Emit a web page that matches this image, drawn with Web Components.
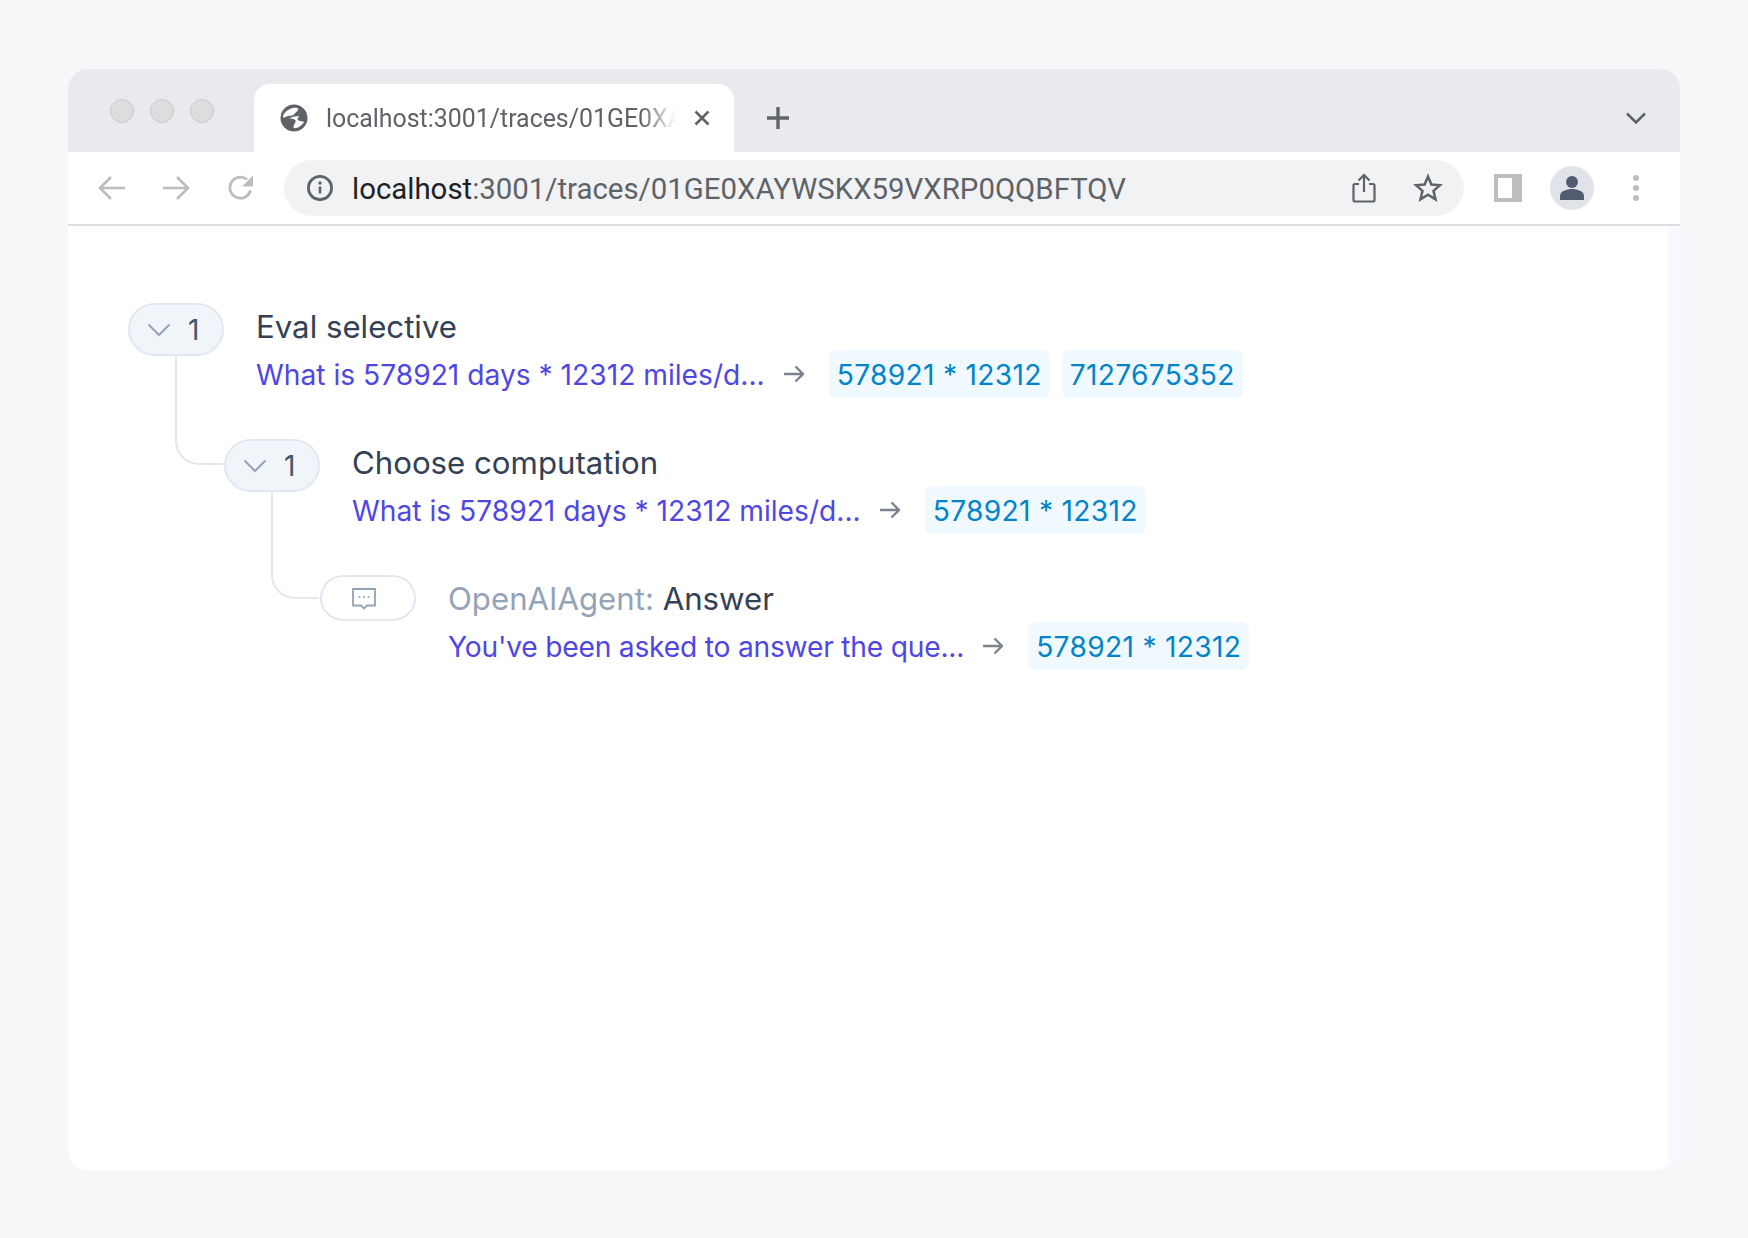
<!DOCTYPE html>
<html><head><meta charset="utf-8">
<style>
html,body{margin:0;padding:0;background:#f6f7f9;}
body{width:1748px;height:1238px;font-family:Inter,"Liberation Sans",sans-serif;}
</style></head>
<body>
<browser-window>
  <browser-tabstrip slot="strip" label="localhost:3001/traces/01GE0XA"></browser-tabstrip>
  <browser-toolbar slot="bar"></browser-toolbar>
  <trace-node count="1">
    <span slot="title">Eval selective</span>
    <span slot="input">What is 578921 days * 12312 miles/d...</span>
    <trace-tag slot="output">578921 * 12312</trace-tag>
    <trace-tag slot="output">7127675352</trace-tag>
    <trace-node count="1" child>
      <span slot="title">Choose computation</span>
      <span slot="input">What is 578921 days * 12312 miles/d...</span>
      <trace-tag slot="output">578921 * 12312</trace-tag>
      <trace-node leaf child>
        <span slot="title"><span style="color:#94a3b8">OpenAIAgent:</span> Answer</span>
        <span slot="input" style="letter-spacing:-.21px">You've been asked to answer the que...</span>
        <trace-tag slot="output">578921 * 12312</trace-tag>
      </trace-node>
    </trace-node>
  </trace-node>
</browser-window>
<script>
function def(name, html, init){
  customElements.define(name, class extends HTMLElement{
    constructor(){super();this.attachShadow({mode:'open'}).innerHTML=html;}
    connectedCallback(){if(init)init(this);}
  });
}
def('browser-window',`<style>
:host{display:block;box-sizing:border-box;padding:69px 68px 68px;height:1238px}
.win{height:1101px;display:flex;flex-direction:column;border-radius:20px;overflow:hidden;background:#f8f9fc}
.page{flex:1;margin-right:12px;background:#fff;padding:77px 60px 0;border-radius:0 0 12px 12px}
</style><div class="win"><slot name="strip"></slot><slot name="bar"></slot><div class="page"><slot></slot></div></div>`);

def('browser-tabstrip',`<style>
:host{display:flex;align-items:flex-end;height:83px;background:#e8eaed;position:relative;flex:none}
.lights{display:flex;gap:16px;padding-left:42px;width:144px;box-sizing:border-box;align-self:flex-start;align-items:center;height:84px}
.lights i{width:24px;height:24px;border-radius:50%;background:#dcdddf;border:1px solid #c6c8ca;box-sizing:border-box;flex:none}
.tab{width:480px;height:68px;margin-left:42px;background:#fff;border-radius:16px 16px 0 0;display:flex;align-items:center;padding-left:26px;box-sizing:border-box;position:relative}
.tab svg.g{width:28px;height:28px;flex:none}
.t{width:350px;margin-left:18px;white-space:nowrap;font:24.9px Roboto,sans-serif;color:#5f6368;-webkit-mask-image:linear-gradient(90deg,#000 90%,transparent 100%);mask-image:linear-gradient(90deg,#000 90%,transparent 100%)}
.x{width:18px;height:18px;margin-left:17px;flex:none}
.plus{width:26px;height:26px;margin:0 0 21px 31px;flex:none}
.sp{flex:1}
.ch{width:22px;height:14px;margin:0 33px 27px 0;flex:none}
</style>
<div class="lights"><i></i><i></i><i></i></div>
<div class="tab">
<svg class="g" viewBox="0 0 28 28"><circle cx="14" cy="14" r="13.500" fill="#5f6368"/><path d="M9 5.500C12 3.500 17 3 18 4.500 19 7 15.500 8 14.500 10 12.500 12.500 9 11 6.500 12.500 5 13.500 3.500 14 3 13 3 10 5.500 7.500 9 5.500z" fill="#fff"/><path d="M7.500 15C10.500 14 13.500 14.500 15.500 16.500 16.500 18.500 13 20.500 13.500 23.500 15.500 25.500 20 23 24 18.500 24 17 20.500 17.500 18.500 16.500 16.500 14.500 18 13.500 19.500 12.500 15.500 11.500 12 13 7.500 15z" fill="#fff"/></svg>
<div class="t" id="t"></div>
<svg class="x" viewBox="0 0 18 18"><path d="M2.500 2.500l13 13M15.500 2.500l-13 13" stroke="#5f6368" stroke-width="2.600" fill="none"/></svg>
</div>
<svg class="plus" viewBox="0 0 26 26"><path d="M13 2v22M2 13h22" stroke="#5f6368" stroke-width="3.400" fill="none"/></svg>
<div class="sp"></div>
<svg class="ch" viewBox="0 0 22 14"><path d="M2 2.500l9 9 9-9" stroke="#5f6368" stroke-width="2.600" fill="none"/></svg>
`,el=>{el.shadowRoot.getElementById('t').textContent=el.getAttribute('label');});

def('browser-toolbar',`<style>
:host{display:flex;align-items:center;height:72px;background:#fff;border-bottom:2px solid #dcdddf;box-sizing:content-box;flex:none}
svg{flex:none;display:block}
.nav{display:flex;align-items:center;gap:36px;padding-left:30px;width:216px;box-sizing:border-box;flex:none}
.nav svg:nth-child(3){margin-left:1px}
.omni{width:1180px;height:56px;background:#f1f2f4;border-radius:28px;display:flex;align-items:center;padding-left:22px;box-sizing:border-box;flex:none}
.url{font:29.400px Roboto,sans-serif;color:#5f6368;margin-left:18px;padding-top:1px;white-space:nowrap;flex:1}
.url b{font-weight:400;color:#202124}
.side{margin-left:30px}
.ava{width:44px;height:44px;border-radius:50%;background:#e0e3e8;margin-left:28px;display:flex;align-items:center;justify-content:center;flex:none}
.dots{margin-left:38px}
</style>
<div class="nav">
<svg width="28" height="26" viewBox="0 0 28 26"><path d="M27 13H2M13 2L2 13l11 11" stroke="#bdbdbd" stroke-width="2.600" fill="none"/></svg>
<svg width="28" height="26" viewBox="0 0 28 26"><path d="M1 13h25M15 2l11 11-11 11" stroke="#bdbdbd" stroke-width="2.600" fill="none"/></svg>
<svg width="28" height="28" viewBox="0 0 28 28"><path d="M23.500 16.500A10.500 10.500 0 1 1 20 5.500" stroke="#bdbdbd" stroke-width="2.800" fill="none"/><path d="M26 1.500v11H15z" fill="#bdbdbd"/></svg>
</div>
<div class="omni">
<svg width="28" height="28" viewBox="0 0 28 28"><circle cx="14" cy="14" r="11.600" stroke="#5f6368" stroke-width="2.800" fill="none"/><path d="M14 12.500v7" stroke="#5f6368" stroke-width="2.600"/><circle cx="14" cy="9" r="1.700" fill="#5f6368"/></svg>
<div class="url"><b>localhost</b>:3001/traces/01GE0XAYWSKX59VXRP0QQBFTQV</div>
<svg width="24" height="30" viewBox="0 0 24 30" style="margin-right:37px"><path d="M7 11H3a1.500 1.500 0 0 0-1.500 1.500V27A1.500 1.500 0 0 0 3 28.500H21A1.500 1.500 0 0 0 22.500 27V12.500A1.500 1.500 0 0 0 21 11H17" stroke="#5f6368" stroke-width="2.200" fill="none"/><path d="M12 19V2M6.500 7.500L12 2l5.500 5.500" stroke="#5f6368" stroke-width="2.200" fill="none"/></svg>
<svg width="30" height="30" viewBox="0 0 30 30" style="margin-right:21px"><path d="M15 3.500l3.400 8 8.600.7-6.500 5.700 2 8.400L15 21.800 7.500 26.300l2-8.400L3 12.200l8.600-.7z" stroke="#5f6368" stroke-width="2.500" fill="none"/></svg>
</div>
<svg class="side" width="28" height="28" viewBox="0 0 28 28"><rect width="28" height="28" fill="#bdbdbd"/><rect x="4" y="4" width="14" height="20" fill="#fff"/></svg>
<div class="ava"><svg width="26" height="26" viewBox="0 0 26 26"><circle cx="13" cy="7" r="6" fill="#525c70"/><path d="M1 25v-4c0-5 7-7 12-7s12 2 12 7v4z" fill="#525c70"/></svg></div>
<svg class="dots" width="8" height="28" viewBox="0 0 8 28"><circle cx="4" cy="4" r="3" fill="#bdbdbd"/><circle cx="4" cy="14" r="3" fill="#bdbdbd"/><circle cx="4" cy="24" r="3" fill="#bdbdbd"/></svg>
`);

def('trace-tag',`<style>
:host{display:inline-flex;align-items:center;height:48px;box-sizing:border-box;padding:1px 8px 0;border-radius:8px;background:#f0f9ff;color:#0284c7;font:28.200px Inter,sans-serif;letter-spacing:.29px;font-feature-settings:"calt" 0;white-space:nowrap}
</style><slot></slot>`);

def('trace-node',`<style>
:host{display:block;position:relative}
:host([child]){margin:41px 0 0 96px}
:host([child])::before{content:"";position:absolute;left:-49px;top:-84px;width:48px;height:110px;box-sizing:border-box;border-left:2px solid #e2e8f0;border-bottom:2px solid #e2e8f0;border-bottom-left-radius:24px}
:host([leaf])::before{height:108px}
.row{display:flex;align-items:flex-start;position:relative}
.pill{width:96px;height:53px;box-sizing:border-box;border:2px solid #e2e8f0;border-radius:27px;background:#f1f5f9;display:flex;align-items:center;padding:0 0 0 17px;flex:none;color:#475569;font:28px Inter,sans-serif}
.pill svg.c{margin-right:17px;flex:none}
:host([leaf]) .pill{height:46px;background:#fff;padding:2px 0 0 30px}
.body{margin-left:32px}
.title{height:47px;font:31.200px/49px Inter,sans-serif;color:#334155;white-space:nowrap}
.line{display:flex;align-items:center;height:48px;color:#4f46e5;font:28.200px Inter,sans-serif;white-space:nowrap}
.in{padding-top:1px}
.arrow{margin:0 25px 0 19px;flex:none}
.tags{display:flex;gap:12px}
</style>
<div class="row">
<div class="pill" id="p"></div>
<div class="body">
<div class="title"><slot name="title"></slot></div>
<div class="line"><span class="in"><slot name="input"></slot></span>
<svg class="arrow" width="20" height="18" viewBox="0 0 20 18"><path d="M0 9h19M11.500 1.500L19 9l-7.500 7.500" stroke="#7b838f" stroke-width="2.300" fill="none"/></svg>
<div class="tags"><slot name="output"></slot></div></div>
</div>
</div>
<slot></slot>`,el=>{
  const p=el.shadowRoot.getElementById('p');
  if(el.hasAttribute('leaf')){
    p.innerHTML='<svg width="24" height="22" viewBox="0 0 24 22"><path d="M1 1h22v16.500h-8L12 20.500 9 17.500H1z" stroke="#94a3b8" stroke-width="1.800" fill="none"/><circle cx="7.500" cy="9" r="1.100" fill="#94a3b8"/><circle cx="12" cy="9" r="1.100" fill="#94a3b8"/><circle cx="16.500" cy="9" r="1.100" fill="#94a3b8"/></svg>';
  }else{
    p.innerHTML='<svg class="c" width="24" height="14" viewBox="0 0 24 14"><path d="M1.500 1.500L12 12 22.500 1.500" stroke="#94a3b8" stroke-width="2" fill="none"/></svg><span>'+el.getAttribute('count')+'</span>';
  }
});
</script>
</body></html>
